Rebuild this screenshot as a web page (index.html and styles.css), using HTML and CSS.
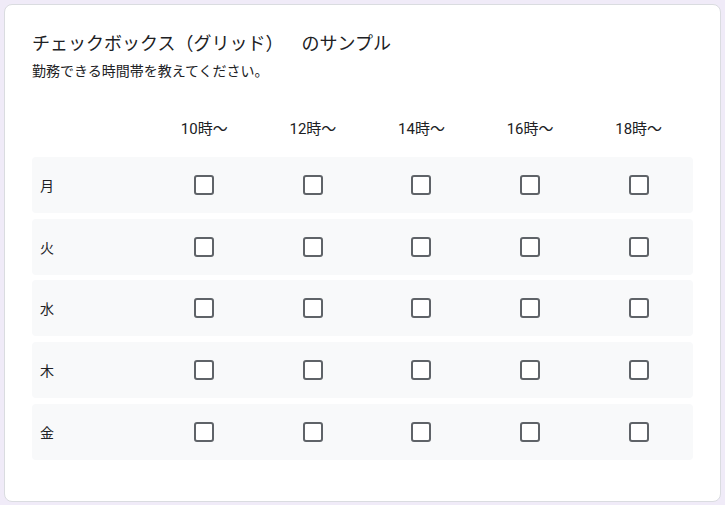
FILE: index.html
```html
<!DOCTYPE html>
<html lang="ja">
<head>
<meta charset="utf-8">
<link rel="stylesheet" href="styles.css">
</head>
<body>
<div class="card">
  <div class="title">チェックボックス（グリッド）　のサンプル</div>
  <div class="desc">勤務できる時間帯を教えてください。</div>
  <div class="grid">
    <div class="row head">
      <div class="label"></div>
      <div class="cell">10時〜</div>
      <div class="cell">12時〜</div>
      <div class="cell">14時〜</div>
      <div class="cell">16時〜</div>
      <div class="cell">18時〜</div>
    </div>
    <div class="row body">
      <div class="label">月</div>
      <div class="cell"><span class="box"></span></div>
      <div class="cell"><span class="box"></span></div>
      <div class="cell"><span class="box"></span></div>
      <div class="cell"><span class="box"></span></div>
      <div class="cell"><span class="box"></span></div>
    </div>
    <div class="row body">
      <div class="label">火</div>
      <div class="cell"><span class="box"></span></div>
      <div class="cell"><span class="box"></span></div>
      <div class="cell"><span class="box"></span></div>
      <div class="cell"><span class="box"></span></div>
      <div class="cell"><span class="box"></span></div>
    </div>
    <div class="row body">
      <div class="label">水</div>
      <div class="cell"><span class="box"></span></div>
      <div class="cell"><span class="box"></span></div>
      <div class="cell"><span class="box"></span></div>
      <div class="cell"><span class="box"></span></div>
      <div class="cell"><span class="box"></span></div>
    </div>
    <div class="row body">
      <div class="label">木</div>
      <div class="cell"><span class="box"></span></div>
      <div class="cell"><span class="box"></span></div>
      <div class="cell"><span class="box"></span></div>
      <div class="cell"><span class="box"></span></div>
      <div class="cell"><span class="box"></span></div>
    </div>
    <div class="row body">
      <div class="label">金</div>
      <div class="cell"><span class="box"></span></div>
      <div class="cell"><span class="box"></span></div>
      <div class="cell"><span class="box"></span></div>
      <div class="cell"><span class="box"></span></div>
      <div class="cell"><span class="box"></span></div>
    </div>
  </div>
</div>
</body>
</html>
```

FILE: styles.css
```css
html, body {
  margin: 0;
  padding: 0;
  background: #f0ebf8;
}
body {
  padding: 4px 4px 3px 4px;
  font-family: Roboto, "Noto Sans CJK JP", sans-serif;
  color: #202124;
  text-spacing-trim: space-all;
}
.card {
  box-sizing: border-box;
  width: 717px;
  height: 498px;
  background: #ffffff;
  border: 1px solid #dadce0;
  border-radius: 8px;
  padding: 27px 27px 0 27px;
}
.title {
  font-size: 18px;
  line-height: 24px;
  color: #202124;
}
.desc {
  margin-top: 5px;
  font-size: 14px;
  line-height: 20px;
  color: #202124;
}
.grid {
  margin-top: 22px;
  display: flex;
  flex-direction: column;
  gap: 5.75px;
}
.row {
  display: grid;
  grid-template-columns: 118px repeat(5, 1fr);
  align-items: center;
}
.row.head {
  height: 48px;
  font-size: 15px;
}
.row.body {
  height: 56px;
  background: #f8f9fa;
  border-radius: 4px;
  font-size: 14px;
}
.label {
  padding-left: 8px;
}
.cell {
  display: flex;
  justify-content: center;
  align-items: center;
}
.box {
  box-sizing: border-box;
  width: 20px;
  height: 20px;
  border: 2px solid #5f6368;
  border-radius: 3px;
  background: #ffffff;
}
```
